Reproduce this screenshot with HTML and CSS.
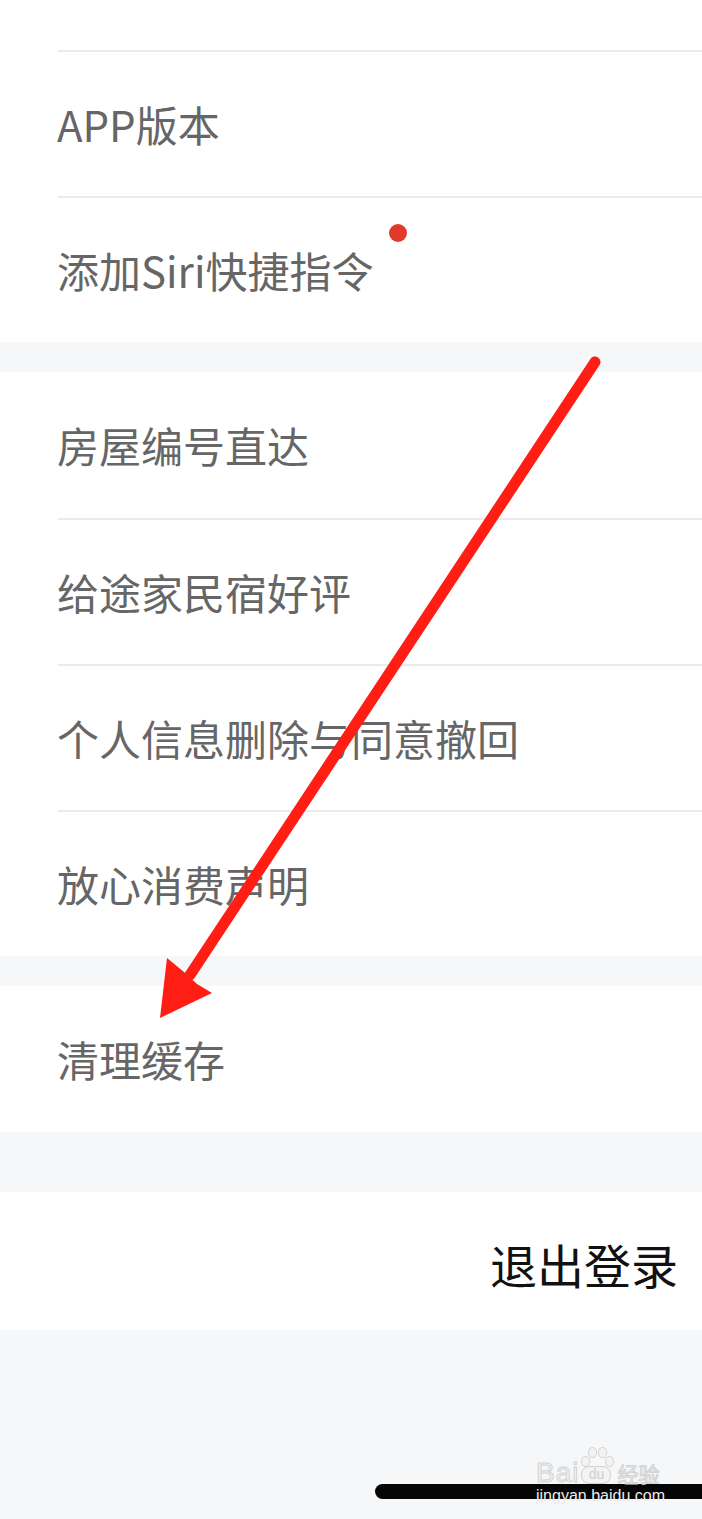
FILE: index.html
```html
<!DOCTYPE html>
<html lang="zh-CN">
<head>
  <meta charset="UTF-8" />
  <meta name="viewport" content="width=device-width, initial-scale=1.0"/>
  <title>设置</title>
  <link rel="stylesheet" href="styles.css">
</head>
<body>
  <div class="page">

    <section class="group">
      <div class="stub"></div>
      <div class="row"><span class="label">APP版本</span></div>
      <div class="row"><span class="label badge-wrap">添加Siri快捷指令<i class="dot"></i></span></div>
    </section>

    <section class="group">
      <div class="row first"><span class="label">房屋编号直达</span></div>
      <div class="row"><span class="label">给途家民宿好评</span></div>
      <div class="row"><span class="label">个人信息删除与同意撤回</span></div>
      <div class="row"><span class="label">放心消费声明</span></div>
    </section>

    <section class="group">
      <div class="row first"><span class="label">清理缓存</span></div>
    </section>

    <section class="group logout">
      <span class="logout-text">退出登录</span>
    </section>

    <!-- annotation arrow drawn on top of the screenshot -->
    <svg class="arrow" width="702" height="1519" viewBox="0 0 702 1519">
      <line x1="595" y1="362" x2="190" y2="975" stroke="#ff1d14" stroke-width="11" stroke-linecap="round"/>
      <polygon points="160,1018 167,958 184,972 197,984 212,993" fill="#ff1d14"/>
    </svg>

    <div class="home-bar"></div>

    <div class="watermark">
      <div class="wm-logo">
        <span class="wm-bai">Bai</span>
        <span class="wm-paw">
          <i class="toe t1"></i><i class="toe t2"></i><i class="toe t3"></i><i class="toe t4"></i>
          <span class="wm-du">du</span>
        </span>
        <span class="wm-jy">经验</span>
      </div>
      <div class="wm-url">jingyan.baidu.com</div>
    </div>
  </div>
</body>
</html>
```

FILE: styles.css
```css
body { margin: 0; background: #f6f7f9; font-family: "Noto Sans CJK SC", "Noto Sans", sans-serif; }
.page { position: relative; width: 702px; height: 1519px; overflow: hidden; background: #f6f7f9; }

.group { background: #fff; margin-bottom: 30px; }
.group:nth-of-type(3) { margin-bottom: 60px; }

.stub { height: 50px; }
.row { height: 146px; box-sizing: border-box; margin-left: 58px; border-top: 2px solid #ebebeb; display: flex; align-items: center; }
.row.first { border-top: none; }
.label { font-size: 42px; color: #666; line-height: 1; margin-left: -1px; }

.badge-wrap { position: relative; }
.dot { position: absolute; right: -34px; top: -25px; width: 18px; height: 18px; border-radius: 50%; background: #e2392c; }

.logout { height: 138px; display: flex; align-items: center; justify-content: flex-end; padding-right: 24px; margin-bottom: 0; }
.logout-text { font-size: 47px; color: #111; line-height: 1; margin-top: 4px; }

.arrow { position: absolute; left: 0; top: 0; pointer-events: none; }

.home-bar { position: absolute; left: 375px; top: 1484px; width: 360px; height: 15px; border-radius: 8px; background: #050505; }

/* baidu jingyan watermark */
.watermark { position: absolute; left: 536px; top: 1440px; width: 140px; white-space: nowrap; }
.wm-logo { display: flex; align-items: flex-end; height: 44px; }
.wm-bai { font-family: "Liberation Sans", sans-serif; font-size: 28px; line-height: 22px; color: #f3f3f3; -webkit-text-stroke: 1px #d2d2d2; letter-spacing: 1px; }
.wm-paw { position: relative; width: 30px; height: 40px; margin-left: 2px; }
.wm-du { position: absolute; left: 0; bottom: 0; width: 28px; height: 16px; border-radius: 8px; border: 1px solid #d2d2d2; background: #f3f3f3; font-family: "Liberation Sans", sans-serif; font-size: 14px; line-height: 15px; text-align: center; color: #cfcfcf; }
.toe { position: absolute; width: 7px; height: 9px; border-radius: 50%; border: 1px solid #d2d2d2; background: #f3f3f3; }
.t1 { left: 0; top: 12px; }
.t2 { left: 7px; top: 3px; }
.t3 { left: 17px; top: 3px; }
.t4 { left: 24px; top: 12px; }
.wm-jy { font-size: 21px; line-height: 22px; margin-left: 6px; color: #f3f3f3; -webkit-text-stroke: 1px #d2d2d2; }
.wm-url { font-family: "Liberation Sans", sans-serif; font-size: 16px; line-height: 16px; margin-top: 4px; color: #ececec; }
```
